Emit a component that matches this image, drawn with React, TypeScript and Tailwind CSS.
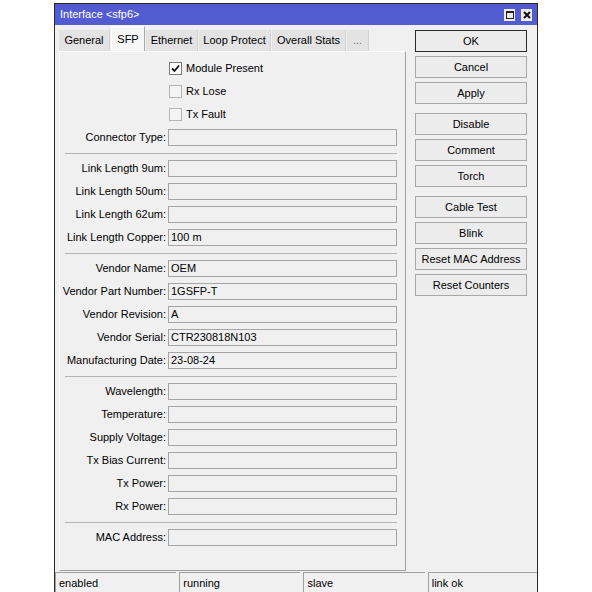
import React from 'react';

const FONT = "font-['Liberation_Sans',Arial,sans-serif]";

type Row = { kind: 'check'; label: string; checked?: boolean } | { kind: 'field'; label: string; value?: string } | { kind: 'sep' };

const rows: Row[] = [
  { kind: 'check', label: 'Module Present', checked: true },
  { kind: 'check', label: 'Rx Lose' },
  { kind: 'check', label: 'Tx Fault' },
  { kind: 'field', label: 'Connector Type:' },
  { kind: 'sep' },
  { kind: 'field', label: 'Link Length 9um:' },
  { kind: 'field', label: 'Link Length 50um:' },
  { kind: 'field', label: 'Link Length 62um:' },
  { kind: 'field', label: 'Link Length Copper:', value: '100 m' },
  { kind: 'sep' },
  { kind: 'field', label: 'Vendor Name:', value: 'OEM' },
  { kind: 'field', label: 'Vendor Part Number:', value: '1GSFP-T' },
  { kind: 'field', label: 'Vendor Revision:', value: 'A' },
  { kind: 'field', label: 'Vendor Serial:', value: 'CTR230818N103' },
  { kind: 'field', label: 'Manufacturing Date:', value: '23-08-24' },
  { kind: 'sep' },
  { kind: 'field', label: 'Wavelength:' },
  { kind: 'field', label: 'Temperature:' },
  { kind: 'field', label: 'Supply Voltage:' },
  { kind: 'field', label: 'Tx Bias Current:' },
  { kind: 'field', label: 'Tx Power:' },
  { kind: 'field', label: 'Rx Power:' },
  { kind: 'sep' },
  { kind: 'field', label: 'MAC Address:' },
];

const tabs = [
  { name: 'General', w: 'w-[51px]' },
  { name: 'SFP', w: 'w-[34px]', active: true },
  { name: 'Ethernet', w: 'w-[52px]' },
  { name: 'Loop Protect', w: 'w-[72px]' },
  { name: 'Overall Stats', w: 'w-[74px]' },
  { name: '...', w: 'w-[22px]' },
];

// button groups, extra gap between them
const buttonGroups = [
  ['OK', 'Cancel', 'Apply'],
  ['Disable', 'Comment', 'Torch'],
  ['Cable Test', 'Blink', 'Reset MAC Address', 'Reset Counters'],
];

function Checkbox({ checked }: { checked?: boolean }) {
  return (
    <div
      className={`w-[13px] h-[13px] border flex items-center justify-center ${
        checked ? 'border-[#7a7a7a] bg-white' : 'border-[#b5b5b5] bg-[#f4f4f4]'
      }`}
    >
      {checked && (
        <svg width="9" height="9" viewBox="0 0 9 9">
          <polyline points="1,4.5 3.5,7 8,1.5" fill="none" stroke="#111" strokeWidth="1.8" />
        </svg>
      )}
    </div>
  );
}

export default function App() {
  return (
    <div className={`w-[592px] h-[592px] bg-white overflow-hidden pt-[3px] pl-[54px] text-[11px] text-black ${FONT}`}>
      <div className="w-[484px] h-[600px] border border-[#2a2a2a] bg-[#f0f0f0] flex flex-col">
        {/* Title bar */}
        <div className="h-[21px] bg-[#525bd0] flex items-center justify-between pl-[5px] pr-[5px]">
          <span className="text-white text-[11px]">Interface &lt;sfp6&gt;</span>
          <div className="flex items-center gap-[6px]">
            <div className="w-[11px] h-[12px] bg-[#ececec] flex items-center justify-center">
              <div className="w-[8px] h-[8px] border border-[#222] border-t-2"></div>
            </div>
            <div className="w-[11px] h-[12px] bg-[#ececec] flex items-center justify-center">
              <svg width="8" height="8" viewBox="0 0 8 8">
                <path d="M1 1 L7 7 M7 1 L1 7" stroke="#111" strokeWidth="2" />
              </svg>
            </div>
          </div>
        </div>

        {/* Body */}
        <div className="h-[547px] flex">
          {/* Tabs + panel */}
          <div className="ml-[4px] mt-[1px] flex flex-col">
            <div className="h-[25px] flex items-end gap-[1px]">
              {tabs.map((t) =>
                t.active ? (
                  <div
                    key={t.name}
                    className={`${t.w} h-[25px] bg-[#f6f6f6] border-l border-r border-t border-l-white border-r-[#a8a8a8] border-t-white flex items-center justify-center`}
                  >
                    {t.name}
                  </div>
                ) : (
                  <div
                    key={t.name}
                    className={`${t.w} h-[21px] bg-[#e3e3e3] border-r border-[#d2d2d2] flex items-center justify-center ${
                      t.name === '...' ? 'text-[#777]' : ''
                    }`}
                  >
                    {t.name}
                  </div>
                )
              )}
            </div>
            <div className="w-[347px] h-[520px] border border-t-white border-l-white border-r-[#a0a0a0] border-b-[#a0a0a0] bg-[#f0f0f0] pt-[5px]">
              {rows.map((r, i) => {
                if (r.kind === 'sep')
                  return (
                    <div key={i} className="h-[8px] flex items-center">
                      <div className="ml-[5px] w-[332px] border-t border-[#b4b4b4]"></div>
                    </div>
                  );
                if (r.kind === 'check')
                  return (
                    <div key={i} className="h-[23px] flex items-center pl-[109px]">
                      <Checkbox checked={r.checked} />
                      <span className="ml-[4px]">{r.label}</span>
                    </div>
                  );
                return (
                  <div key={i} className="h-[23px] flex items-center">
                    <div className="w-[106px] text-right whitespace-nowrap">{r.label}</div>
                    <div className="ml-[2px] w-[229px] h-[17px] border border-[#a5a5a5] bg-[#f0f0f0] pl-[2px] flex items-center">
                      {r.value}
                    </div>
                  </div>
                );
              })}
            </div>
          </div>

          {/* Buttons */}
          <div className="ml-[9px] mt-[5px] flex flex-col gap-[9px]">
            {buttonGroups.map((g, gi) => (
              <div key={gi} className="flex flex-col gap-[4px]">
                {g.map((b) => (
                  <div
                    key={b}
                    className={`w-[112px] h-[22px] flex items-center justify-center bg-[#ececec] border ${
                      b === 'OK' ? 'border-[#2a2a2a]' : 'border-[#a8a8a8]'
                    }`}
                  >
                    {b}
                  </div>
                ))}
              </div>
            ))}
          </div>
        </div>

        {/* Status bar */}
        <div className="flex gap-[3px] h-[22px]">
          {['enabled', 'running', 'slave', 'link ok'].map((s, i) => (
            <div
              key={s}
              className={`${i === 3 ? 'w-[110px]' : 'w-[122px]'} h-[22px] border-t border-l border-[#a0a0a0] pl-[3px] pt-[2px]`}
            >
              {s}
            </div>
          ))}
        </div>
      </div>
    </div>
  );
}
